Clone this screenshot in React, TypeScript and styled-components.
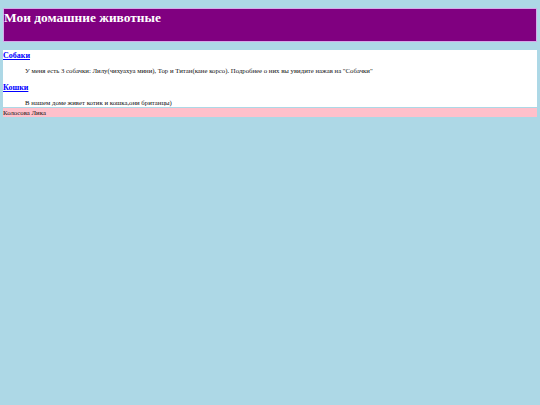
import React from "react";
import styled, { createGlobalStyle } from "styled-components";

const Global = createGlobalStyle`
  body {
    margin: 8px 3px;
    background-color: lightblue;
    font-family: "Liberation Serif", "Times New Roman", serif;
  }
`;

const App = () => {
  return (
    <>
      <Global />
      <Header>
        <Title>Мои домашние животные</Title>
      </Header>
      <Main>
        <Link href="#">Собаки</Link>
        <Text>
          У меня есть 3 собачки: Лилу(чихуахуа мини), Тор и Титан(кане корсо).
          Подробнее о них вы увидите нажав на "Собачки"
        </Text>
        <Link href="#">Кошки</Link>
        <Text>В нашем доме живет котик и кошка,они британцы)</Text>
      </Main>
      <Footer>Колосова Лика</Footer>
    </>
  );
};

export default App;

const Header = styled.header`
  height: 32px;
  background-color: purple;
  border: 1px solid #d6a8ea;
  margin-bottom: 8px;
`;

const Title = styled.h1`
  margin: 0;
  padding: 1px 0 0;
  font-size: 13.4px;
  line-height: 15px;
  color: white;
`;

const Main = styled.main`
  background-color: white;
  height: 57px;
  overflow: hidden;
`;

const Link = styled.a`
  display: block;
  font-size: 8px;
  font-weight: bold;
  color: blue;
  line-height: 11px;
`;

const Text = styled.p`
  margin: 5px 0 7px 22px;
  font-size: 6.75px;
  line-height: 9px;
  color: #111;
`;

const Footer = styled.footer`
  background-color: pink;
  margin-top: 1px;
  font-size: 6.75px;
  line-height: 9px;
  color: #111;
`;
